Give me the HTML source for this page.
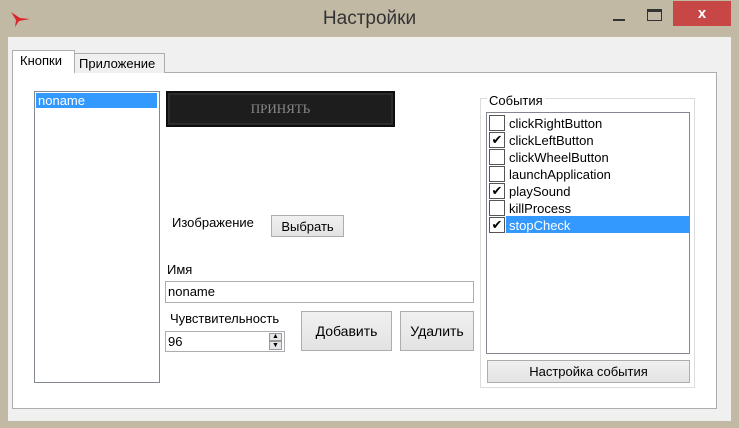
<!DOCTYPE html>
<html><head><meta charset="utf-8"><style>
*{margin:0;padding:0;box-sizing:border-box}
body{width:739px;height:428px;background:#c1b9a4;position:relative;overflow:hidden;font-family:"Liberation Sans","DejaVu Sans",sans-serif;font-size:12px;color:#000}
.a{position:absolute}
.btn{position:absolute;background:linear-gradient(#f0f0f0,#e3e3e3);border:1px solid #adadad;text-align:center}
.cb{position:absolute;left:489px;width:16px;height:16px;border:1px solid #555;background:#fff;font-size:13px;line-height:13px;text-align:center;font-weight:bold}
.it{position:absolute;left:509px;font-size:13px}
</style></head><body>
<svg class="a" style="left:10px;top:10px" width="22" height="18" viewBox="0 0 22 18"><path d="M1 2 L10 8 L20 9 L9 11 L5 17 L6 10 Z" fill="#d9262c"/></svg>
<div class="a" style="left:0;top:8px;width:739px;text-align:center;font-size:19px;color:#333">Настройки</div>
<div class="a" style="left:613px;top:19px;width:12px;height:2px;background:#333"></div>
<div class="a" style="left:647px;top:9px;width:15px;height:12px;border:1px solid #333;border-top:3px solid #333"></div>
<div class="a" style="left:673px;top:1px;width:58px;height:25px;background:#c74646;color:#fff;text-align:center;font-size:15px;line-height:25px;font-weight:bold">x</div>
<div class="a" style="left:8px;top:37px;width:723px;height:384px;background:#f0f0f0"></div>
<div class="a" style="left:12px;top:72px;width:705px;height:337px;background:#fff;border:1px solid #adadad"></div>
<div class="a" style="left:74px;top:53px;width:91px;height:20px;background:#f0f0f0;border:1px solid #adadad;border-bottom:none;padding:2px 0 0 4px;font-size:13px">Приложение</div>
<div class="a" style="left:12px;top:50px;width:63px;height:23px;background:#fff;border:1px solid #adadad;border-bottom:none;padding:2px 0 0 7px;font-size:13px">Кнопки</div>
<div class="a" style="left:34px;top:91px;width:126px;height:292px;border:1px solid #828790;background:#fff"></div>
<div class="a" style="left:36px;top:93px;width:121px;height:15px;background:#3399ff;color:#fff;padding-left:2px;font-size:13px;line-height:15px">noname</div>
<div class="a" style="left:166px;top:91px;width:229px;height:36px;background:#1d1d1d;border:2px solid #0e0e0e;box-shadow:inset 0 0 0 2px #2c2c2c;color:#8a8a8a;text-align:center;line-height:32px;font-family:'Liberation Serif',serif;font-size:13px">ПРИНЯТЬ</div>
<div class="a" style="left:172px;top:215px;font-size:13px">Изображение</div>
<div class="btn" style="left:271px;top:215px;width:73px;height:22px;font-size:13px;line-height:22px">Выбрать</div>
<div class="a" style="left:167px;top:262px;font-size:13px">Имя</div>
<div class="a" style="left:165px;top:281px;width:309px;height:22px;border:1px solid #abadb3;font-size:13px;line-height:20px;padding-left:2px">noname</div>
<div class="a" style="left:170px;top:311px;font-size:13px">Чувствительность</div>
<div class="a" style="left:165px;top:331px;width:120px;height:21px;border:1px solid #abadb3;font-size:13px;line-height:19px;padding-left:2px">96</div>
<div class="a" style="left:269px;top:333px;width:13px;height:8px;background:#e6e6e6;border:1px solid #999;font-size:7px;line-height:6px;text-align:center">▲</div>
<div class="a" style="left:269px;top:341px;width:13px;height:9px;background:#e6e6e6;border:1px solid #999;font-size:7px;line-height:7px;text-align:center">▼</div>
<div class="btn" style="left:301px;top:311px;width:91px;height:40px;font-size:14px;line-height:38px">Добавить</div>
<div class="btn" style="left:400px;top:311px;width:74px;height:40px;font-size:14px;line-height:38px">Удалить</div>
<div class="a" style="left:480px;top:98px;width:215px;height:290px;border:1px solid #dcdcdc"></div>
<div class="a" style="left:487px;top:93px;background:#fff;padding:0 2px;font-size:13px">События</div>
<div class="a" style="left:486px;top:112px;width:204px;height:242px;border:1px solid #828790;background:#fff"></div>
<div class="a" style="left:506px;top:216px;width:183px;height:17px;background:#3399ff"></div>
<div class="cb" style="top:115px"></div><div class="it" style="top:116px">clickRightButton</div>
<div class="cb" style="top:132px">✔</div><div class="it" style="top:133px">clickLeftButton</div>
<div class="cb" style="top:149px"></div><div class="it" style="top:150px">clickWheelButton</div>
<div class="cb" style="top:166px"></div><div class="it" style="top:167px">launchApplication</div>
<div class="cb" style="top:183px">✔</div><div class="it" style="top:184px">playSound</div>
<div class="cb" style="top:200px"></div><div class="it" style="top:201px">killProcess</div>
<div class="cb" style="top:217px">✔</div><div class="it" style="top:218px;color:#fff">stopCheck</div>
<div class="btn" style="left:487px;top:360px;width:203px;height:23px;font-size:13px;line-height:22px">Настройка события</div>
</body></html>
